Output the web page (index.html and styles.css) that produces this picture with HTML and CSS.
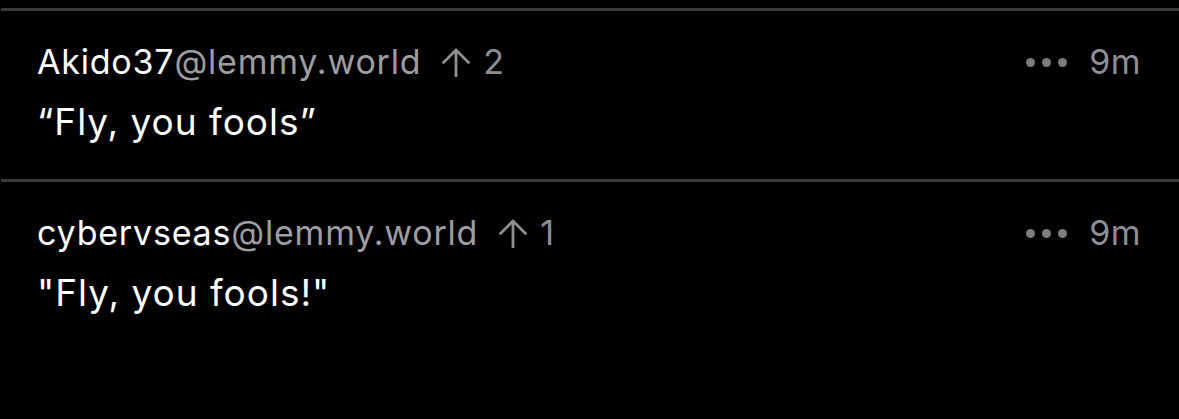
FILE: index.html
```html
<!DOCTYPE html>
<html lang="en">

<head>
    <meta charset="UTF-8">
    <meta name="viewport" content="width=device-width, initial-scale=1.0">
    <title>Comments</title>
    <link rel="stylesheet" href="styles.css">
</head>

<body>
    <div class="comments">
        <!-- first comment -->
        <div class="comment">
            <div class="comment-header">
                <span class="author">Akido37<span class="instance">@lemmy.world</span></span>
                <span class="score">
                    <svg class="arrow" width="30" height="30" viewBox="0 0 30 30">
                        <path d="M15 29V3 M2.5 15.5L15 3L27.5 15.5" fill="none" stroke="currentColor" stroke-width="2.8" stroke-linecap="round" stroke-linejoin="round"/>
                    </svg>
                    <span>2</span>
                </span>
                <span class="spacer"></span>
                <span class="more"><i></i><i></i><i></i></span>
                <span class="time">9m</span>
            </div>
            <p class="comment-body">“Fly, you fools”</p>
        </div>

        <!-- second comment -->
        <div class="comment">
            <div class="comment-header">
                <span class="author">cybervseas<span class="instance">@lemmy.world</span></span>
                <span class="score">
                    <svg class="arrow" width="30" height="30" viewBox="0 0 30 30">
                        <path d="M15 29V3 M2.5 15.5L15 3L27.5 15.5" fill="none" stroke="currentColor" stroke-width="2.8" stroke-linecap="round" stroke-linejoin="round"/>
                    </svg>
                    <span>1</span>
                </span>
                <span class="spacer"></span>
                <span class="more"><i></i><i></i><i></i></span>
                <span class="time">9m</span>
            </div>
            <p class="comment-body">"Fly, you fools!"</p>
        </div>
    </div>
</body>

</html>
```

FILE: styles.css
```css
body {
    font-family: Inter, Roboto, sans-serif;
    margin: 0;
    padding: 0;
    background-color: #000;
    color: #fff;
}

.comments {
    padding-top: 8px;
}

.comment {
    border-top: 3px solid #3a3a3c;
    margin-left: 1px;
    padding: 30px 38px 0 36px;
    height: 138px;
}

.comment-header {
    display: flex;
    align-items: center;
    font-size: 34px;
    line-height: 42px;
    height: 42px;
    letter-spacing: 0.8px;
}

.author {
    color: #fff;
}

.instance {
    color: #9d9da2;
}

.score {
    display: flex;
    align-items: center;
    gap: 12px;
    margin-left: 20px;
    color: #8e8e93;
}

.arrow {
    display: block;
}

.spacer {
    flex: 1;
}

.more {
    display: flex;
    gap: 7px;
    margin-right: 22px;
}

.more i {
    width: 9px;
    height: 9px;
    border-radius: 50%;
    background-color: #7c7c80;
}

.time {
    color: #8e8e93;
    letter-spacing: 0.4px;
}

.comment-body {
    margin: 17px 0 0;
    font-size: 37px;
    line-height: 44px;
    letter-spacing: 1px;
}
```
